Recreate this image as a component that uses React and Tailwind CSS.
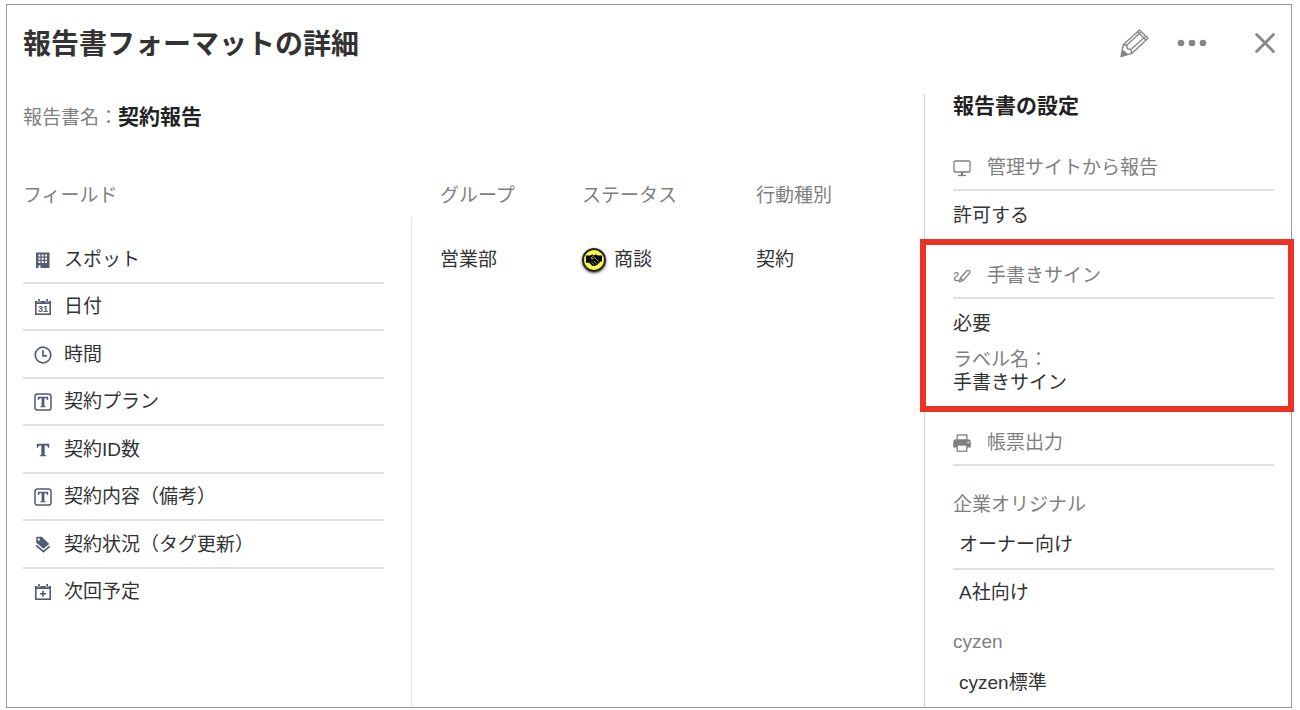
import React from "react";

const iconProps = {
  viewBox: "0 0 18 18",
  className: "h-[18px] w-[18px] shrink-0",
  "aria-hidden": true,
};

function BuildingIcon() {
  return (
    <svg {...iconProps}>
      <path d="M2 1.5h13.5v15.5H6.5v-2.5H4.5V17H2z" fill="currentColor" />
      <path
        d="M4.4 3.6h2v2h-2zM7.7 3.6h2v2h-2zM11 3.6h2v2h-2zM4.4 6.8h2v2h-2zM7.7 6.8h2v2h-2zM11 6.8h2v2h-2zM4.4 10h2v2h-2zM7.7 10h2v2h-2zM11 10h2v2h-2z"
        fill="#fff"
      />
    </svg>
  );
}

function CalendarFrame({ children }) {
  return (
    <svg {...iconProps}>
      <rect x="1.8" y="3.8" width="14.4" height="12.4" fill="none" stroke="currentColor" strokeWidth="1.6" />
      <path d="M1 3h16v3H1z" fill="currentColor" />
      <path d="M3.4 1h3v3.2h-3zM11.6 1h3v3.2h-3z" fill="#fff" />
      <path d="M4.1 1h1.7v2.7H4.1zM12.3 1H14v2.7h-1.7z" fill="currentColor" />
      {children}
    </svg>
  );
}

function CalendarDateIcon() {
  return (
    <CalendarFrame>
      <text
        x="9"
        y="14.2"
        textAnchor="middle"
        fill="currentColor"
        className="font-['Liberation_Sans',sans-serif] text-[9px] font-bold"
      >
        31
      </text>
    </CalendarFrame>
  );
}

function CalendarPlusIcon() {
  return (
    <CalendarFrame>
      <path d="M9 7.8v6M6 10.8h6" stroke="currentColor" strokeWidth="1.6" />
    </CalendarFrame>
  );
}

function ClockIcon() {
  return (
    <svg {...iconProps} fill="none" stroke="currentColor" strokeWidth="1.7">
      <circle cx="9" cy="9" r="7.8" />
      <path d="M9 4.2v5.6h4" />
    </svg>
  );
}

const LETTER_T =
  "M3.8 3.8h10.4v3.3h-1c-.3-1.4-.8-1.9-2.1-1.9h-.7v7.3c0 .7.3.9 1.3.9v.9H6.3v-.9c1 0 1.3-.2 1.3-.9V5.2h-.7c-1.3 0-1.8.5-2.1 1.9h-1z";

function TextBoxIcon() {
  return (
    <svg {...iconProps}>
      <rect x="1" y="1" width="16" height="16" rx="2.6" fill="none" stroke="currentColor" strokeWidth="1.5" />
      <path d={LETTER_T} fill="currentColor" />
    </svg>
  );
}

function TextIcon() {
  return (
    <svg {...iconProps} viewBox="1.5 1.5 15 15">
      <path d={LETTER_T} fill="currentColor" />
    </svg>
  );
}

function TagsIcon() {
  return (
    <svg {...iconProps}>
      <path
        fill="currentColor"
        fillRule="evenodd"
        d="M2.2 2Q2.2.8 3.4.8h4.4L15.2 8 9.4 12.8 2.2 6.6zM4.8 2.2a1.2 1.2 0 1 0 0 2.4 1.2 1.2 0 0 0 0-2.4z"
      />
      <path d="M2.2 9.4L9.4 15.6 15.6 10.4" fill="none" stroke="currentColor" strokeWidth="1.8" />
    </svg>
  );
}

function MonitorIcon() {
  return (
    <svg {...iconProps} fill="none" stroke="currentColor" strokeWidth="1.3">
      <rect x="1" y="2" width="16" height="11" rx="1" />
      <path d="M9 13v3.4" strokeWidth="2.4" />
      <path d="M5 16.5h8" />
    </svg>
  );
}

function SignatureIcon() {
  return (
    <svg {...iconProps} fill="none" stroke="currentColor" strokeWidth="1.3" strokeLinejoin="round">
      <path d="M1 7.2C2.6 5 5.6 5.2 5 7.4 4.4 9.2 1 10.2 1.4 12.2c.4 1.8 3 1.7 5 .9" />
      <path d="M7.4 11L13.8 3.8q1.3-1 2.4 0 1.2 1.1.3 2.4L10.2 13.4 6.6 15z" />
      <path d="M7.4 11L10.2 13.4" />
    </svg>
  );
}

function PrinterIcon() {
  return (
    <svg {...iconProps}>
      <rect x="4.2" y="1" width="9.6" height="6" fill="#fff" stroke="currentColor" strokeWidth="1.3" />
      <path d="M2.6 5.2h12.8q2.4.3 2.4 2.8v5.4H.2V8q0-2.5 2.4-2.8z" fill="currentColor" />
      <rect x="4.2" y="11" width="9.6" height="6.2" fill="#fff" stroke="currentColor" strokeWidth="1.3" />
      <circle cx="15.2" cy="8.4" r=".8" fill="#fff" />
    </svg>
  );
}

function PencilIcon() {
  return (
    <svg viewBox="0 0 29 29" className="h-[29px] w-[29px]" fill="none" stroke="currentColor" strokeWidth="1.4" aria-hidden="true">
      <path d="M3.2 15.8L19.5 1 28 9.2 11.8 24.4 1 27.6z" strokeLinejoin="round" />
      <path d="M3.2 15.8l3.4.4.8 3.4 3.4 1 1 3.8" />
      <path d="M6.4 16.4L20.8 3.2M10.6 20.8L25.4 7.4M17.6 2.8l8.6 8.4" strokeWidth="1.3" />
      <path d="M2.6 20.6l6 4.6L.8 27.8z" fill="currentColor" stroke="none" />
    </svg>
  );
}

function HandshakeBadge() {
  return (
    <span className="h-6 w-6 rounded-full shadow-sm shadow-black/60">
      <svg viewBox="0 0 24 24" className="h-6 w-6" aria-hidden="true">
        <circle cx="12" cy="12" r="11" fill="#fbf850" stroke="#222" strokeWidth="2" />
        <path
          d="M4 7.4h4.2l2-.8 1.8.6 1.8-.6 2.2.8h4v6.2h-1.8l-.6 1.2-1.3.7-.8 1.2-1.3.4-1 .9-1.6-.2-1.2.2-3.2-3.2H4z"
          fill="#000"
        />
        <path
          d="M12 7.4L8.8 10.2q.8 1.4 2.6.2l1.2-.8 4.6 4.2M11.8 12.8l2.8 2.8M9.4 14l2.6 2.6"
          fill="none"
          stroke="#fbf850"
          strokeWidth=".7"
        />
      </svg>
    </span>
  );
}

const fields = [
  { label: "スポット", Icon: BuildingIcon },
  { label: "日付", Icon: CalendarDateIcon },
  { label: "時間", Icon: ClockIcon },
  { label: "契約プラン", Icon: TextBoxIcon },
  { label: "契約ID数", Icon: TextIcon },
  { label: "契約内容（備考）", Icon: TextBoxIcon },
  { label: "契約状況（タグ更新）", Icon: TagsIcon },
  { label: "次回予定", Icon: CalendarPlusIcon },
];

function SettingHeading({ Icon, children }) {
  return (
    <h3 className="flex items-center gap-4 border-b-2 border-[#e0e0e0] pb-[7px] text-[#808080]">
      <Icon />
      {children}
    </h3>
  );
}

export default function App() {
  return (
    <div className="flex min-h-screen bg-white pt-1 pr-2 pb-0.5 pl-1.5 font-['Liberation_Sans','Noto_Sans_CJK_JP',sans-serif] text-[19px] leading-7 text-[#333]">
      <main className="flex flex-1 flex-col border border-[#999]">
        <header className="mb-[13px] flex h-19 items-center justify-between px-4">
          <h1 className="pt-1 text-[28px] font-bold">報告書フォーマットの詳細</h1>
          <div className="flex items-center text-[#858585]">
            <button type="button" aria-label="編集" className="mr-7">
              <PencilIcon />
            </button>
            <button type="button" aria-label="メニュー" className="mr-12">
              <svg viewBox="0 0 30 8" className="h-2 w-[30px]" fill="currentColor" aria-hidden="true">
                <circle cx="4" cy="4" r="3.3" />
                <circle cx="15" cy="4" r="3.3" />
                <circle cx="26" cy="4" r="3.3" />
              </svg>
            </button>
            <button type="button" aria-label="閉じる">
              <svg viewBox="0 0 20 20" className="h-5 w-5" stroke="currentColor" strokeWidth="2.8" strokeLinecap="round" aria-hidden="true">
                <path d="M1.6 1.6l16.8 16.8M18.4 1.6L1.6 18.4" />
              </svg>
            </button>
          </div>
        </header>

        <div className="flex flex-1">
          <div className="flex flex-1 flex-col pt-[9px] pl-4">
            <p className="text-[#808080]">
              報告書名：<strong className="text-[21px] text-[#222]">契約報告</strong>
            </p>

            <div className="mt-[50px] flex flex-1">
              <section className="flex w-[389px] flex-col">
                <h2 className="mb-[7px] text-[#808080]">フィールド</h2>
                <div className="flex-1 border-r border-[#e6e6e6] pt-[19px] pr-[27px]">
                  <ul className="grid h-[380px] grid-rows-8">
                    {fields.map(({ label, Icon }) => (
                      <li
                        key={label}
                        className="flex items-center gap-3 border-b-2 border-[#e0e0e0] pt-0.5 pl-[11px] last:border-transparent"
                      >
                        <span className="text-[#535b75]">
                          <Icon />
                        </span>
                        {label}
                      </li>
                    ))}
                  </ul>
                </div>
              </section>

              <div className="flex-1 pl-7">
                <table className="w-full table-fixed text-left">
                  <colgroup>
                    <col className="w-[142px]" />
                    <col className="w-[174px]" />
                    <col />
                  </colgroup>
                  <thead className="text-[#808080]">
                    <tr>
                      <th className="p-0 font-normal">グループ</th>
                      <th className="p-0 font-normal">ステータス</th>
                      <th className="p-0 font-normal">行動種別</th>
                    </tr>
                  </thead>
                  <tbody>
                    <tr>
                      <td className="p-0 pt-9">営業部</td>
                      <td className="p-0 pt-9">
                        <span className="flex items-center gap-2">
                          <HandshakeBadge />
                          商談
                        </span>
                      </td>
                      <td className="p-0 pt-9">契約</td>
                    </tr>
                  </tbody>
                </table>
              </div>
            </div>
          </div>

          <aside className="w-[367px] border-l border-[#d4d4d4] pr-[17px] pb-2 pl-7">
            <h2 className="text-[21px] leading-6 font-bold text-[#222]">報告書の設定</h2>

            <section className="mt-9">
              <SettingHeading Icon={MonitorIcon}>管理サイトから報告</SettingHeading>
              <p className="mt-[11px]">許可する</p>
            </section>

            <section className="relative mt-8">
              <SettingHeading Icon={SignatureIcon}>手書きサイン</SettingHeading>
              <p className="mt-[11px]">必要</p>
              <dl className="mt-2.5 leading-[23px]">
                <dt className="text-[#808080]">ラベル名：</dt>
                <dd>手書きサイン</dd>
              </dl>
              <div className="pointer-events-none absolute -top-[23px] -right-5 -bottom-[18px] -left-[33px] border-6 border-[#ea3323]" />
            </section>

            <section className="mt-[35px]">
              <SettingHeading Icon={PrinterIcon}>帳票出力</SettingHeading>
              <h4 className="mt-[25px] text-[#808080]">企業オリジナル</h4>
              <ul className="mt-3">
                <li className="border-b-2 border-[#e0e0e0] pb-[9px] pl-1.5">オーナー向け</li>
                <li className="pt-[9px] pl-1.5">A社向け</li>
              </ul>
              <h4 className="mt-[21px] text-[#808080]">cyzen</h4>
              <ul className="mt-[13px]">
                <li className="pl-1.5">cyzen標準</li>
              </ul>
            </section>
          </aside>
        </div>
      </main>
    </div>
  );
}
